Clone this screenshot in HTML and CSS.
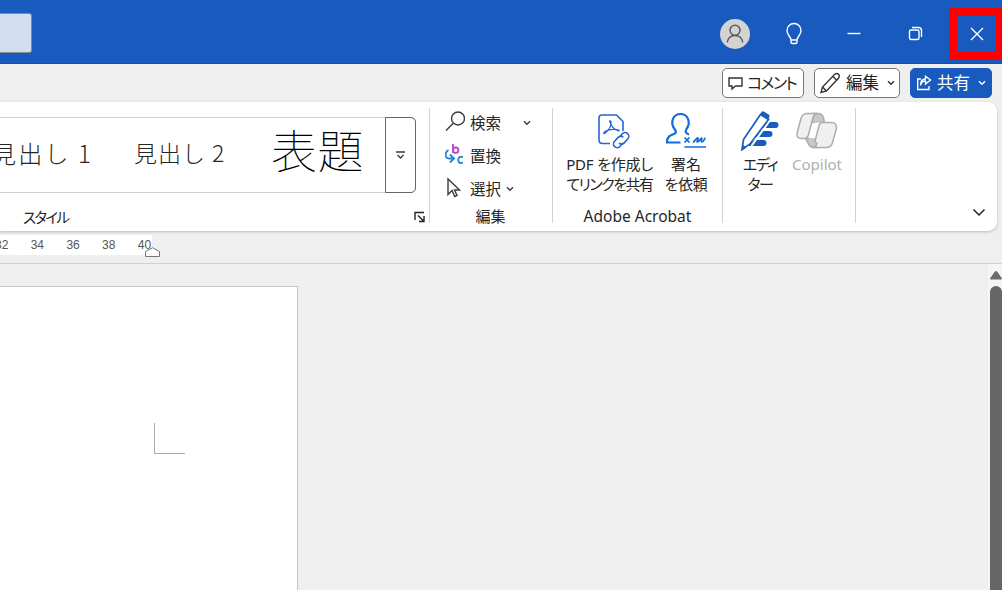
FILE: index.html
```html
<!DOCTYPE html>
<html lang="ja">
<head>
<meta charset="utf-8">
<title>Word</title>
<link rel="stylesheet" href="styles.css">
</head>
<body>
<header class="titlebar">
  <div class="search"></div>
  <div class="window-tools">
    <span class="avatar"><svg width="30" height="30" viewBox="0 0 30 30"><circle cx="15" cy="11.200" r="5"/><path d="M7.200 23.500C8 18.500 11 16.400 15 16.400S22 18.500 22.800 23.500"/></svg></span>
    <svg class="bulb" width="18" height="24" viewBox="0 0 18 24"><path d="M6 18C5.500 14 2 13 2 8.500a7 7 0 0 1 14 0c0 4.500-3.500 5.500-4 9.500v2q0 1.500-1.500 1.500h-3Q6 21.500 6 20zM6 18h6"/></svg>
    <svg class="minimize" width="14" height="14" viewBox="0 0 14 14"><path d="M.5 6.500h13"/></svg>
    <svg class="restore" width="15" height="15" viewBox="0 0 15 15"><rect x="1.500" y="4" width="9.500" height="9.500" rx="1.500"/><path d="M4 1.500h6.500q3 0 3 3V11"/></svg>
    <span class="close"><svg width="14" height="14" viewBox="0 0 14 14"><path d="M1 1l12 12M13 1L1 13"/></svg></span>
  </div>
</header>

<div class="commands">
  <button class="cmd comment"><svg width="16" height="15" viewBox="0 0 16 15"><path d="M1 2h13v8H7.500L4 13v-3H1z"/></svg><span>コメント</span></button>
  <button class="cmd edit"><svg width="22" height="22" viewBox="0 0 22 22"><path d="M1 20.500L2.500 15 15 2q2-1.300 3.500.300T18.700 6L6.500 19zM12.800 4.200l4 4M2.500 15l4 4"/></svg><span>編集</span><svg class="chev" width="8" height="6" viewBox="0 0 8 6"><path d="M1 1.300l3 3 3-3"/></svg></button>
  <button class="cmd share"><svg width="16" height="16" viewBox="0 0 16 16"><path d="M5 4H1.700v10.500H13V11M4.500 10.500C5 7 7 6 9.500 6v3L14.500 5 9.500 1.300V4C6 4 4.500 7 4.500 10.500z"/></svg><span>共有</span><svg class="chev" width="8" height="6" viewBox="0 0 8 6"><path d="M1 1.300l3 3 3-3"/></svg></button>
</div>

<section class="ribbon">
  <div class="group styles">
    <div class="gallery">
      <div class="style heading1">見出し 1</div>
      <div class="style heading2">見出し 2</div>
      <div class="style title">表題</div>
      <div class="more"><svg width="9" height="9" viewBox="0 0 9 9"><path d="M0 1h9M1.500 4l3 3 3-3"/></svg></div>
    </div>
    <div class="style-footer"><span>スタイル</span><svg width="12" height="12" viewBox="0 0 12 12"><path d="M1 9V1.500h9M4 4.500l5.500 5.500M10 5v5.500H5"/></svg></div>
  </div>

  <div class="group editing">
    <div class="row"><svg width="20" height="22" viewBox="0 0 20 22"><circle cx="13" cy="7.500" r="6.500"/><path d="M8.200 12.200L1 19.500"/></svg><span>検索</span><svg class="chev far" width="8" height="6" viewBox="0 0 8 6"><path d="M1 1.300l3 3 3-3"/></svg></div>
    <div class="row"><svg width="20" height="22" viewBox="0 0 20 22"><g class="purple"><path d="M8 0v9"/><circle cx="10.700" cy="6.200" r="2.700"/></g><g class="blue"><path d="M3.500 6C-1 9 0 14.500 4 14.500h4M5 10.500l4 4-4 4M18 13.200q-4.500-1.500-4.700 2.600t4.700 2.900"/></g></svg><span>置換</span></div>
    <div class="row"><svg width="20" height="22" viewBox="0 0 20 22"><path d="M3 2v15.500l4-4 2.700 6 2.300-1-2.500-5.500h5z"/></svg><span>選択</span><svg class="chev" width="8" height="6" viewBox="0 0 8 6"><path d="M1 1.300l3 3 3-3"/></svg></div>
    <div class="group-label">編集</div>
  </div>

  <div class="group acrobat">
    <div class="tools">
      <div class="tool pdf">
        <svg width="34" height="38" viewBox="0 0 34 38"><path d="M13 30.500H5.500q-3.500 0-3.500-3.500V5q0-3 3-3h14.500l6.500 6.500V18"/><path d="M12.500 8q2-1 1.500 3-1 5-5.500 9-2 1.500-1.700-.5Q11 16 19 16.500q4.500.500 2.500 1.500Q15 16 12.500 8z" stroke-width="1.200"/><g transform="rotate(-48 24 27)"><path d="M23 30.500h-4.500a3.700 3.700 0 0 1 0-7.400h5.500q3.500.3 3.700 3.700"/><path d="M25 23.900h4.500a3.700 3.700 0 0 1 0 7.400h-5.500q-3.500-.3-3.700-3.700"/></g></svg>
        <span class="line l1">PDF を作成し</span><span class="line l2">てリンクを共有</span>
      </div>
      <div class="tool sign">
        <svg width="42" height="38" viewBox="0 0 42 38"><path d="M15.500 30.500H2c0-6 3-7 7-8.500 3-1 2-3 .500-5-5-7-1-15 6-15s11 8 6 15q-2.500 4 2.500 5.500"/><path class="script" d="M19.500 25.500l5 5M24.500 25.500l-5 5M28 30.500c3-3 4-5 5-4.500s-2 4-.5 4c2 0 3-4 4-4s-1 4 .500 4 2-3 3.500-4M19.500 35h21.500"/></svg>
        <span class="line l3">署名</span><span class="line l4">を依頼</span>
      </div>
    </div>
    <div class="group-label">Adobe Acrobat</div>
  </div>

  <div class="group assist">
    <div class="tool editor">
      <svg width="42" height="42" viewBox="0 0 42 42"><path class="fill" d="M27 12h9.500q3 0 3 3t-3 3H22zM22 21h8.500q3 0 3 3t-3 3H16zM16 30h8.500q3 0 3 3t-3 3H9z"/><path class="gap" d="M22 4.500l9.500 5L12.500 36"/><path class="pencil" d="M21.500 4.500l8 5L11 34 3 39.500l1.500-10z"/><path class="fill" d="M21 4.200l1.700-2.400q.8-1 2-.3l5 3q1.200.8.700 2L29.500 10zM3.500 34.500l4 3-5 3.500z"/></svg>
      <span class="line">エディ</span><span class="line">ター</span>
    </div>
    <div class="tool copilot">
      <svg width="42" height="38" viewBox="0 0 42 38"><path class="dark" d="M18 1.500h4q4.500 0 5.500 4.500l1 4.500H16zM9.500 26.500H22v9h-4q-4.500 0-6-4.500z"/><path class="light" d="M18.500 10.500H25l-4.500 16h-7z"/><path d="M11.500 1.500h10q-3.500.3-4.500 4l-4.500 17q-1 4-4.500 4H5.500Q0 26.500 1.200 20.500L5 6.500Q6.300 1.500 11.500 1.500z"/><path d="M26.500 10.500h9q6 0 4.800 6.500l-3.800 13.500q-1.300 5-6.500 5H16.500q3.500 0 4.500-4l-2-2 3.800-15q1-4 3.700-4z"/></svg>
      <span class="line">Copilot</span>
    </div>
  </div>
  <svg class="collapse" width="14" height="9" viewBox="0 0 14 9"><path d="M1.500 1.500L7 7l5.500-5.500"/></svg>
</section>

<div class="ruler">
  <div class="scale"><span>32</span><span>34</span><span>36</span><span>38</span><span>40</span></div>
  <svg class="indent" width="16" height="10" viewBox="0 0 16 10"><path d="M.5 9.500V4.500L7.500.7l7 3.800v5z"/></svg>
</div>

<main class="workspace">
  <div class="page"><div class="crop"></div></div>
  <div class="scrollbar"><svg width="12" height="10" viewBox="0 0 12 10"><path d="M4.700 1.800q1.300-1.800 2.600 0l4.400 6.200q.5 1.500-1 1.500H1.300q-1.500 0-1-1.500z"/></svg><div class="thumb"></div></div>
</main>
</body>
</html>
```
FILE: styles.css
```css
* { box-sizing: border-box; }
body {
  margin: 0; width: 1002px; height: 590px; overflow: hidden;
  display: flex; flex-direction: column;
  background: #efefef; color: #262626;
  font-family: "Noto Sans", "Noto Sans CJK JP", sans-serif;
  font-size: 15.500px; white-space: nowrap;
}
svg { display: block; flex: none; fill: none; stroke: #3b3b3b; stroke-width: 1.400; }

.titlebar { height: 64px; flex: none; background: #185abd; display: flex; justify-content: space-between; border-bottom: 1px solid #124fae; }
.search { width: 32px; height: 40px; margin-top: 13px; background: #d1dff0; border: 1px solid #858b96; border-left: 0; border-radius: 0 3px 3px 0; }
.window-tools { width: 282px; display: flex; align-items: center; padding-top: 4px; flex: none; }
.window-tools svg { stroke: #fff; }
.window-tools .avatar { width: 30px; height: 30px; border-radius: 50%; background: #d3d3d3; }
.window-tools .avatar svg { stroke: #5c5c5c; stroke-width: 1.500; }
.bulb { margin-left: 35px; }
.minimize { margin-left: 44px; }
.restore { margin-left: 47px; }
.close { flex: none; width: 55px; height: 52px; margin: 1px 0 0 26px; border: 8px solid #fe0000; border-radius: 2px; display: flex; align-items: center; justify-content: center; }

.commands { height: 38px; flex: none; padding: 4px 10px 0 0; display: flex; justify-content: flex-end; gap: 10px; background: #efefef; }
.cmd { height: 30px; border: 1px solid #777; border-radius: 5px; background: #fff; display: flex; align-items: center; padding: 0 0 0 5px; font: inherit; font-size: 16.500px; line-height: 28px; color: #222; }
.cmd svg { stroke: #333; }
.cmd .chev { margin-left: 8px; stroke-width: 1.500; }
.comment { width: 82px; }
.comment span { margin-left: 3px; font-size: 16px; font-feature-settings: "palt"; letter-spacing: -1.700px; }
.edit { width: 86px; }
.edit span { margin-left: 4px; }
.share { width: 82px; background: #185abd; border-color: #185abd; color: #fff; }
.share svg { stroke: #fff; }
.share span { margin-left: 5px; }

.ribbon { width: 997px; height: 129px; flex: none; background: #fff; border-radius: 0 9px 9px 0; box-shadow: 0 1px 3px #bbb; display: flex; padding-top: 6px; z-index: 1; }
.group { height: 115px; border-right: 1px solid #d2d2d2; flex: none; }
.styles { width: 430px; }
.gallery { display: flex; width: 416px; height: 76px; margin-top: 9px; border: 1px solid #cfcfcf; border-left: 0; border-radius: 0 5px 5px 0; }
.style { line-height: 69px; font-family: "Noto Sans CJK JP", sans-serif; font-weight: 300; font-size: 24px; }
.heading1 { width: 134px; margin-left: -8px; letter-spacing: 2.200px; }
.heading2 { width: 138px; font-size: 23px; margin-left: 8px; letter-spacing: 1px; }
.title { width: 114px; font-size: 46px; font-weight: 100; line-height: 61px; color: #000; margin-left: -1px; letter-spacing: .5px; }
.more { width: 31px; margin: -1px -1px -1px 0; border: 1px solid #666; border-radius: 0 5px 5px 0; display: flex; align-items: center; justify-content: center; }
.style-footer { display: flex; justify-content: space-between; align-items: center; padding: 0 3px 0 23px; height: 24px; margin-top: 11px; }
.style-footer span { font-size: 14.500px; font-feature-settings: "palt"; letter-spacing: -1.700px; }
.style-footer svg { stroke: #222; margin-top: 2px; }

.editing { width: 123px; padding-left: 15px; }
.row { height: 33px; display: flex; align-items: center; }
.row:first-child { margin-top: -2px; }
.row svg:first-child { margin-top: -1px; }
.row span { margin-left: 5px; }
.row .chev { margin-left: 5px; }
.row .far { margin-left: 22px; }
.row .purple { stroke: #b74fc6; stroke-width: 1.900; }
.row .blue { stroke: #2985d3; stroke-width: 1.900; }
.group-label { height: 24px; line-height: 24px; text-align: center; font-size: 15px; }
.editing .group-label { margin: -1px 16px 0 0; }

.acrobat { width: 170px; }
.tools { display: flex; height: 96px; }
.tool { display: flex; flex-direction: column; align-items: center; }
.line { font-size: 15px; line-height: 19.500px; font-feature-settings: "palt"; }
.pdf { width: 113px; padding-top: 5px; }
.pdf svg { stroke: #2864d8; margin: 0 0 4px 8px; stroke-width: 1.600; }
.l1 { letter-spacing: -0.200px; }
.l2 { letter-spacing: -1.500px; }
.sign { width: 40px; padding-top: 4px; }
.sign svg { stroke: #126bdd; stroke-width: 2.200; margin-bottom: 5px; }
.sign .script { stroke-width: 1.700; }
.l4 { letter-spacing: -0.300px; }
.acrobat .group-label { font-size: 15.500px; }

.assist { width: 133px; display: flex; padding-left: 15px; }
.editor { width: 44px; padding-top: 2px; }
.editor svg { stroke: none; margin-bottom: 3px; }
.editor .line { letter-spacing: -1.500px; }
.editor .fill { fill: #1b5dbe; }
.editor .gap { stroke: #fff; stroke-width: 2; }
.editor .pencil { fill: #fff; stroke: #1b5dbe; stroke-width: 1.700; }
.copilot { width: 70px; padding-top: 4px; color: #b0b0b0; }
.copilot svg { stroke: #adadad; fill: #f0f0f0; margin-bottom: 5px; stroke-width: 1.500; }
.copilot .dark { fill: #c8c8c8; }
.copilot .light { fill: #fff; stroke: none; }
.collapse { margin: 100px 0 0 116px; stroke: #222; stroke-width: 1.500; }

.ruler { height: 33px; flex: none; display: flex; border-bottom: 1px solid #d1d1d1; padding-top: 4px; }
.scale { width: 152px; height: 20px; background: #fff; display: flex; gap: 22px; font: 12px/20px "Liberation Sans", sans-serif; color: #555; }
.scale span { width: 13.700px; flex: none; }
.scale span:first-child { margin-left: -5px; }
.indent { margin: 12px 0 0 -7px; fill: #fff; stroke: #777; stroke-width: 1; }

.workspace { flex: 1; min-height: 0; display: flex; justify-content: space-between; }
.page { width: 298px; margin-top: 22px; background: #fff; border: 1px solid #c5c5c5; border-width: 1px 1px 0 0; padding: 136px 0 0 154px; }
.crop { width: 31px; height: 31px; border-left: 1px solid #aaa; border-bottom: 1px solid #aaa; }
.scrollbar { width: 14px; padding: 6px 0 0 2px; background: #f5f5f5; display: flex; flex-direction: column; }
.scrollbar svg { fill: #6b6b6b; stroke: none; }
.thumb { width: 12px; flex: 1; margin-top: 6px; background: #666; border-radius: 6px 6px 0 0; }
```
